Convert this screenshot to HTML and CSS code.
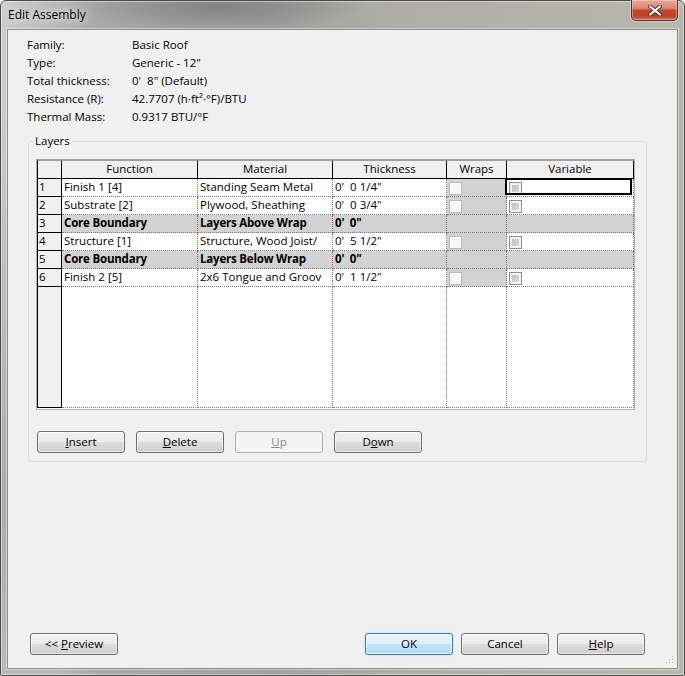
FILE: index.html
```html
<!DOCTYPE html>
<html lang="en">
<head>
    <meta charset="UTF-8">
    <meta name="viewport" content="width=device-width, initial-scale=1.0">
    <title>Edit Assembly</title>
    <link rel="stylesheet" href="styles.css">
</head>
<body>

<div class="window">
    <div class="titlebar">
        <span class="caption">Edit Assembly</span>
        <button class="close" title="Close">
            <svg width="14" height="11" viewBox="0 0 14 11">
                <path d="M2 1.5 L12 9.5 M12 1.5 L2 9.5" stroke="#3a3a3a" stroke-width="4" stroke-linecap="round"/>
                <path d="M2 1.5 L12 9.5 M12 1.5 L2 9.5" stroke="#ffffff" stroke-width="2.2" stroke-linecap="round"/>
            </svg>
        </button>
    </div>

    <div class="client">
        <div class="props">
            <span>Family:</span><span>Basic Roof</span>
            <span>Type:</span><span>Generic - 12"</span>
            <span>Total thickness:</span><span class="keep">0'  8" (Default)</span>
            <span>Resistance (R):</span><span>42.7707 (h·ft²·°F)/BTU</span>
            <span>Thermal Mass:</span><span>0.9317 BTU/°F</span>
        </div>

        <fieldset class="layers">
            <legend>Layers</legend>

            <div class="grid-box">
                <div class="grid">
                    <!-- header -->
                    <div class="cell head"></div>
                    <div class="cell head">Function</div>
                    <div class="cell head">Material</div>
                    <div class="cell head">Thickness</div>
                    <div class="cell head">Wraps</div>
                    <div class="cell head">Variable</div>

                    <div class="cell rowhead">1</div>
                    <div class="cell">Finish 1 [4]</div>
                    <div class="cell">Standing Seam Metal</div>
                    <div class="cell">0'  0 1/4"</div>
                    <div class="cell wraps"><span class="chk off"></span></div>
                    <div class="cell current"><span class="chk"></span></div>

                    <div class="cell rowhead">2</div>
                    <div class="cell">Substrate [2]</div>
                    <div class="cell">Plywood, Sheathing</div>
                    <div class="cell">0'  0 3/4"</div>
                    <div class="cell wraps"><span class="chk off"></span></div>
                    <div class="cell"><span class="chk"></span></div>

                    <div class="cell rowhead">3</div>
                    <div class="cell core">Core Boundary</div>
                    <div class="cell core">Layers Above Wrap</div>
                    <div class="cell core">0'  0"</div>
                    <div class="cell core"></div>
                    <div class="cell core"></div>

                    <div class="cell rowhead">4</div>
                    <div class="cell">Structure [1]</div>
                    <div class="cell">Structure, Wood Joist/</div>
                    <div class="cell">0'  5 1/2"</div>
                    <div class="cell wraps"><span class="chk off"></span></div>
                    <div class="cell"><span class="chk"></span></div>

                    <div class="cell rowhead">5</div>
                    <div class="cell core">Core Boundary</div>
                    <div class="cell core">Layers Below Wrap</div>
                    <div class="cell core">0'  0"</div>
                    <div class="cell core"></div>
                    <div class="cell core"></div>

                    <div class="cell rowhead">6</div>
                    <div class="cell">Finish 2 [5]</div>
                    <div class="cell">2x6 Tongue and Groov</div>
                    <div class="cell">0'  1 1/2"</div>
                    <div class="cell wraps"><span class="chk off"></span></div>
                    <div class="cell"><span class="chk"></span></div>

                    <!-- empty space under the last layer -->
                    <div class="cell rowhead"></div>
                    <div class="cell"></div>
                    <div class="cell"></div>
                    <div class="cell"></div>
                    <div class="cell"></div>
                    <div class="cell"></div>
                </div>
            </div>

            <div class="grid-buttons">
                <button class="btn"><u>I</u>nsert</button>
                <button class="btn"><u>D</u>elete</button>
                <button class="btn" disabled><u>U</u>p</button>
                <button class="btn">D<u>o</u>wn</button>
            </div>
        </fieldset>

        <div class="footer">
            <button class="btn preview">&lt;&lt; <u>P</u>review</button>
            <button class="btn default">OK</button>
            <button class="btn">Cancel</button>
            <button class="btn"><u>H</u>elp</button>
        </div>

        <svg class="grip" width="10" height="10" viewBox="0 0 10 10">
            <g fill="#ffffff">
                <rect x="9" y="1" width="1" height="1"/>
                <rect x="6" y="4" width="1" height="1"/><rect x="9" y="4" width="1" height="1"/>
                <rect x="3" y="7" width="1" height="1"/><rect x="6" y="7" width="1" height="1"/><rect x="9" y="7" width="1" height="1"/>
            </g>
            <g fill="#b8b8b8">
                <rect x="8" y="0" width="1" height="1"/>
                <rect x="5" y="3" width="1" height="1"/><rect x="8" y="3" width="1" height="1"/>
                <rect x="2" y="6" width="1" height="1"/><rect x="5" y="6" width="1" height="1"/><rect x="8" y="6" width="1" height="1"/>
            </g>
        </svg>
    </div>
</div>

</body>
</html>
```

FILE: styles.css
```css
body {
    margin: 0;
    background: #ffffff;
    font-family: "Open Sans", "Liberation Sans", sans-serif;
    font-size: 11.5px;
    color: #000;
}

/* window frame (glass) */
.window {
    box-sizing: border-box;
    width: 685px;
    height: 676px;
    border: 1px solid #4a4a4a;
    border-radius: 6px 6px 2px 2px;
    padding: 0 6px 6px 6px;
    display: flex;
    flex-direction: column;
    background:
        radial-gradient(ellipse 150px 26px at 215px 6px, rgba(120, 120, 120, 0.75), rgba(120, 120, 120, 0)),
        radial-gradient(ellipse 60px 400px at 0 500px, rgba(150, 150, 150, 0.6), rgba(150, 150, 150, 0)),
        linear-gradient(90deg, #cdcdcd 0%, #aaaaaa 14%, #a2a2a2 40%, #aeaea6 58%, #b8b8af 100%);
    box-shadow: inset 0 0 0 1px rgba(255, 255, 255, 0.45);
}

.titlebar {
    height: 28px;
    display: flex;
    align-items: flex-start;
}

.caption {
    margin: 6px 0 0 1px;
    font-size: 12px;
    line-height: 16px;
    color: #000;
    text-shadow: 0 0 6px #e8e8e8, 0 0 10px #e0e0e0;
}

.close {
    box-sizing: border-box;
    margin-left: auto;
    margin-top: -1px;
    width: 47px;
    height: 21px;
    padding: 0;
    border: 1px solid #5e2a22;
    border-top: none;
    border-radius: 0 0 5px 5px;
    background: linear-gradient(#e6ab9c 0%, #d98671 42%, #c3452c 52%, #c0412a 80%, #d26b52 100%);
    box-shadow: inset 0 0 0 1px rgba(255, 220, 210, 0.45), 0 0 0 1px rgba(255, 255, 255, 0.35);
    display: flex;
    align-items: center;
    justify-content: center;
}

/* dialog body */
.client {
    position: relative;
    flex: 1;
    display: flex;
    flex-direction: column;
    background: #f0f0f0;
    border: 1px solid #8e8e8e;
    box-shadow: 0 0 0 1px rgba(255, 255, 255, 0.4);
}

.props {
    display: grid;
    grid-template-columns: 105px auto;
    padding: 6px 0 0 19px;
    line-height: 18px;
}

.keep {
    white-space: pre;
}

.layers {
    margin: 8px 30px 0 20px;
    padding: 11px 11px 8px 7px;
    border: 1px solid #d5dfe5;
    border-radius: 3px;
    min-width: 0;
}

.layers legend {
    padding: 0 2px;
    margin-left: -3px;
    line-height: 14px;
}

/* layer table */
.grid-box {
    width: 597px;
    border: 1px solid #b4b4b4;
    border-top-color: #a0a0a0;
    padding-bottom: 1px;
    background: #ffffff;
}

.grid {
    display: grid;
    grid-template-columns: 24px 136px 135px 114px 60px 127px;
    grid-template-rows: repeat(7, 18px) 121px;
    border-left: 1px solid #000;
    border-top: 1px solid #a0a0a0;
}

.cell {
    box-sizing: border-box;
    padding: 0 2px;
    line-height: 16px;
    white-space: pre;
    overflow: hidden;
    background: #fff;
    border-right: 1px dotted #777;
    border-bottom: 1px dotted #777;
}

.head {
    background: #f0f0f0;
    text-align: center;
    border-right: 1px solid #000;
    border-bottom: 1px solid #000;
}

.rowhead {
    background: #f0f0f0;
    padding-left: 1px;
    border-right: 1px solid #000;
    border-bottom: 1px solid #000;
}

.core {
    background: #d3d3d3;
    font-weight: bold;
    letter-spacing: -0.2px;
}

.wraps {
    background: #d3d3d3;
}

.current {
    position: relative;
    overflow: visible;
}

.current::after {
    content: "";
    position: absolute;
    left: -2px;
    top: -1px;
    right: 1px;
    bottom: 1px;
    border: 2px solid #000;
}

.chk {
    display: block;
    box-sizing: border-box;
    width: 13px;
    height: 13px;
    margin-top: 3px;
    border: 1px solid #8f8f8f;
    background: linear-gradient(135deg, #b8b8b8, #e2e2e2);
    box-shadow: inset 0 0 0 2px #f2f2f2;
}

.chk.off {
    border-color: #b9b9b9;
    background: #f7f7f7;
    box-shadow: inset 1px 1px 0 #ffffff;
}

/* buttons */
.btn {
    box-sizing: border-box;
    width: 88px;
    height: 22px;
    padding: 0 0 2px 0;
    border: 1px solid #707070;
    border-radius: 3px;
    background: linear-gradient(#f2f2f2 0%, #ebebeb 48%, #dddddd 52%, #cfcfcf 100%);
    box-shadow: inset 0 0 0 1px rgba(255, 255, 255, 0.55);
    font-family: inherit;
    font-size: 11.5px;
    color: #000;
}

.btn:disabled {
    border-color: #adb2b5;
    background: #f4f4f4;
    box-shadow: none;
    color: #8a8a8a;
}

.btn.default {
    border-color: #3c7fb1;
    background: linear-gradient(#ecf7fd 0%, #dcf0fb 48%, #c4e6f8 52%, #aedaf2 100%);
    box-shadow: inset 0 0 0 1px rgba(255, 255, 255, 0.7), 0 0 2px #8fd0f4;
}

.grid-buttons {
    display: flex;
    gap: 11px;
    margin: 21px 0 0 1px;
}

.footer {
    margin-top: auto;
    display: flex;
    gap: 8px;
    padding: 0 32px 13px 22px;
}

.footer .preview {
    margin-right: auto;
}

.grip {
    position: absolute;
    right: 3px;
    bottom: 2px;
}
```
